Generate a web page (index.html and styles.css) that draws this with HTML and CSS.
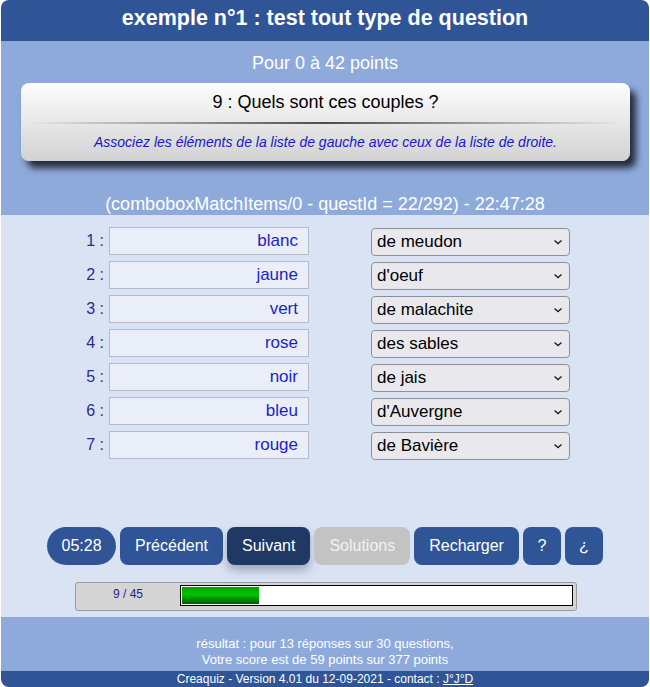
FILE: index.html
```html
<!DOCTYPE html>
<html lang="fr">
<head>
<meta charset="utf-8">
<title>Creaquiz</title>
<link rel="stylesheet" href="styles.css">
</head>
<body>
<div class="page">
  <header class="head">exemple n°1 : test tout type de question</header>
  <section class="top">
    <div class="points">Pour 0 à 42 points</div>
    <div class="card">
      <div class="card-title">9 : Quels sont ces couples ?</div>
      <div class="card-rule"></div>
      <div class="card-hint">Associez les éléments de la liste de gauche avec ceux de la liste de droite.</div>
    </div>
    <div class="qid">(comboboxMatchItems/0 - questId = 22/292) - 22:47:28</div>
  </section>
  <section class="mid">
    <div class="rows">
      <div class="row"><span class="num">1 :</span><span class="item">blanc</span><span class="sel">de meudon<svg class="chev" viewBox="0 0 10 6"><path d="M1.5 1.5 L5 4.5 L8.5 1.5" /></svg></span></div>
      <div class="row"><span class="num">2 :</span><span class="item">jaune</span><span class="sel">d'oeuf<svg class="chev" viewBox="0 0 10 6"><path d="M1.5 1.5 L5 4.5 L8.5 1.5" /></svg></span></div>
      <div class="row"><span class="num">3 :</span><span class="item">vert</span><span class="sel">de malachite<svg class="chev" viewBox="0 0 10 6"><path d="M1.5 1.5 L5 4.5 L8.5 1.5" /></svg></span></div>
      <div class="row"><span class="num">4 :</span><span class="item">rose</span><span class="sel">des sables<svg class="chev" viewBox="0 0 10 6"><path d="M1.5 1.5 L5 4.5 L8.5 1.5" /></svg></span></div>
      <div class="row"><span class="num">5 :</span><span class="item">noir</span><span class="sel">de jais<svg class="chev" viewBox="0 0 10 6"><path d="M1.5 1.5 L5 4.5 L8.5 1.5" /></svg></span></div>
      <div class="row"><span class="num">6 :</span><span class="item">bleu</span><span class="sel">d'Auvergne<svg class="chev" viewBox="0 0 10 6"><path d="M1.5 1.5 L5 4.5 L8.5 1.5" /></svg></span></div>
      <div class="row"><span class="num">7 :</span><span class="item">rouge</span><span class="sel">de Bavière<svg class="chev" viewBox="0 0 10 6"><path d="M1.5 1.5 L5 4.5 L8.5 1.5" /></svg></span></div>
    </div>
    <div class="buttons">
      <span class="btn timer">05:28</span>
      <span class="btn">Précédent</span>
      <span class="btn active">Suivant</span>
      <span class="btn disabled">Solutions</span>
      <span class="btn">Recharger</span>
      <span class="btn small">?</span>
      <span class="btn small">¿</span>
    </div>
    <div class="progress">
      <span class="count">9 / 45</span>
      <div class="bar"><div class="fill" style="width: 77px"></div></div>
    </div>
  </section>
  <section class="result">
    <div>résultat : pour 13 réponses sur 30 questions,</div>
    <div>Votre score est de 59 points sur 377 points</div>
  </section>
  <footer class="foot">Creaquiz - Version 4.01 du 12-09-2021 - contact : <a class="contact" href="#">J°J°D</a></footer>
</div>
</body>
</html>
```

FILE: styles.css
```css
html, body {
  margin: 0;
  padding: 0;
  background: #ffffff;
}
body {
  font-family: "Liberation Sans", Arial, sans-serif;
}
.page {
  width: 648px;
  margin: 0 1px;
  border-radius: 8px;
  overflow: hidden;
  background: #dae3f3;
}
.head {
  height: 41px;
  box-sizing: border-box;
  padding-top: 6px;
  background: #2f5597;
  color: #ffffff;
  font-size: 21.5px;
  font-weight: bold;
  line-height: 24px;
  text-align: center;
}
.top {
  background: #8eaadb;
  padding: 12px 0 1px;
  text-align: center;
  color: #ffffff;
}
.points {
  font-size: 18px;
  line-height: 20px;
}
.card {
  margin: 10px 19px 0 20px;
  height: 78px;
  box-sizing: border-box;
  padding-top: 8px;
  border-radius: 8px;
  background: linear-gradient(#fdfdfd, #d2d2d2);
  box-shadow: 6px 7px 7px rgba(0, 0, 0, 0.75);
  color: #000000;
}
.card-title {
  font-size: 18px;
  line-height: 22px;
}
.card-rule {
  height: 2px;
  margin: 9px 8px 0;
  background: linear-gradient(to right, rgba(80,80,80,0), rgba(60,60,60,0.9) 50%, rgba(80,80,80,0));
}
.card-hint {
  margin-top: 10px;
  font-size: 14px;
  line-height: 16px;
  font-style: italic;
  color: #1717c8;
}
.qid {
  margin-top: 33px;
  font-size: 18px;
  line-height: 20px;
}
.mid {
  padding: 12px 0 6px;
}
.rows {
  display: flex;
  flex-direction: column;
  gap: 6px;
}
.row {
  display: flex;
  align-items: center;
  height: 28px;
}
.num {
  width: 108px;
  padding-right: 5px;
  box-sizing: border-box;
  text-align: right;
  color: #2b2b8f;
  font-size: 16px;
}
.item {
  width: 200px;
  height: 28px;
  box-sizing: border-box;
  border: 1px solid #b3bccd;
  background: #e9eef9;
  color: #1e1ec8;
  font-size: 17px;
  line-height: 26px;
  text-align: right;
  padding-right: 10px;
}
.sel {
  position: relative;
  margin-left: 62px;
  width: 199px;
  height: 28px;
  margin-top: 2px;
  box-sizing: border-box;
  border: 1px solid #8e8e96;
  border-radius: 4px;
  background: #e9e9ed;
  color: #000000;
  font-size: 17px;
  line-height: 26px;
  padding-left: 5px;
}
.chev {
  position: absolute;
  right: 6px;
  top: 10px;
  width: 10px;
  height: 6px;
  fill: none;
  stroke: #202020;
  stroke-width: 1.4;
}
.buttons {
  margin-top: 68px;
  display: flex;
  justify-content: center;
  gap: 4px;
}
.btn {
  height: 38px;
  box-sizing: border-box;
  padding: 0 15px;
  border-radius: 8px;
  background: #2f5597;
  color: #ffffff;
  font-size: 16px;
  line-height: 38px;
  text-align: center;
}
.btn.timer {
  border-radius: 19px;
  width: 69px;
  padding: 0;
}
.btn.active {
  background: #1f3864;
  box-shadow: 0 5px 10px rgba(40, 50, 80, 0.35);
}
.btn.disabled {
  background: #c3c3c3;
  color: #f2f2f2;
}
.btn.small {
  width: 38px;
  padding: 0;
}
.progress {
  margin: 17px 0 0 74px;
  width: 502px;
  height: 29px;
  box-sizing: border-box;
  border: 1px solid #9a9a9a;
  border-radius: 3px;
  background: #d4d4d4;
  display: flex;
  align-items: flex-start;
  padding-top: 2px;
}
.count {
  width: 104px;
  text-align: center;
  color: #1e1e9a;
  font-size: 12px;
  line-height: 19px;
}
.bar {
  width: 393px;
  height: 21px;
  box-sizing: border-box;
  border: 1px solid #000000;
  background: #ffffff;
  padding: 1px;
}
.fill {
  height: 17px;
  background: linear-gradient(#00a000, #00c400 45%, #009000 70%, #005c00);
}
.result {
  background: #8eaadb;
  height: 54px;
  box-sizing: border-box;
  padding-top: 19px;
  text-align: center;
  color: #ffffff;
  font-size: 13px;
  line-height: 16px;
}
.foot {
  background: #2f5597;
  height: 16px;
  color: #ffffff;
  font-size: 12px;
  line-height: 16px;
  text-align: center;
}
.contact {
  color: #ffffff;
}
```
